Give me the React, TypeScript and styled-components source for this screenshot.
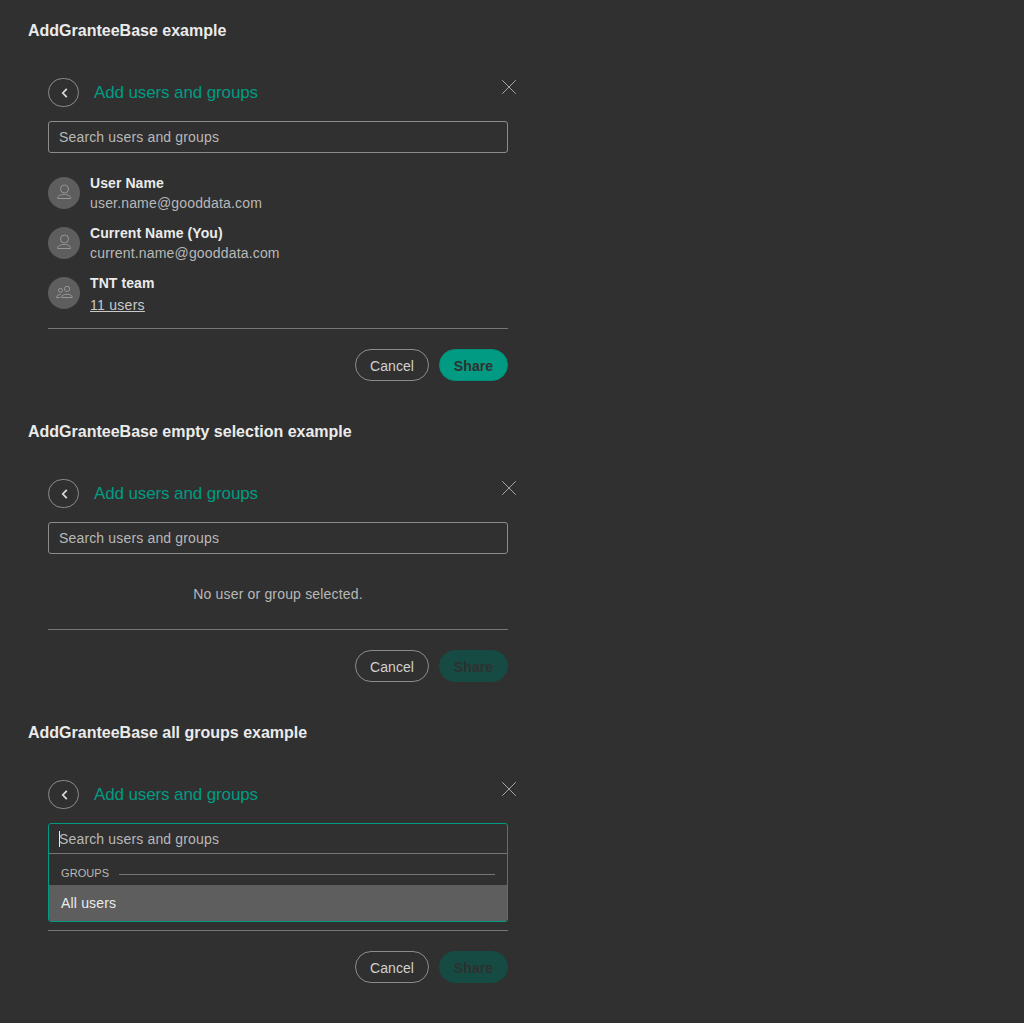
import React from "react";
import styled, { createGlobalStyle, css } from "styled-components";

const GlobalStyle = createGlobalStyle`
  *, *::before, *::after { box-sizing: border-box; }
  body {
    margin: 0;
    background: #303030;
    color: #b8b8b8;
    font: 14px/20px "Liberation Sans", Arial, sans-serif;
    letter-spacing: 0.17px;
  }
`;

const Page = styled.main`
  min-height: 1023px;
  padding: 20px 28px 0;
`;

const Example = styled.section`
  width: 500px;
  padding-bottom: 40px;
`;

const ExampleTitle = styled.h4`
  margin: 0 0 37px;
  font-size: 16px;
  line-height: 21px;
  font-weight: 700;
  letter-spacing: 0;
  color: #ebebeb;
`;

const Dialog = styled.div`
  width: 460px;
  margin-left: 20px;
`;

const Header = styled.header`
  display: flex;
  align-items: flex-start;
  height: 29px;
  margin-bottom: 14px;
`;

const BackButton = styled.button`
  display: flex;
  align-items: center;
  justify-content: center;
  width: 31px;
  height: 29px;
  padding: 0 0 0 1px;
  border: 1px solid #8c8c8c;
  border-radius: 15px;
  background: transparent;
  color: #d8d8d8;
`;

const Heading = styled.h3`
  flex: 1;
  margin: 0 0 0 15px;
  font-size: 17px;
  line-height: 29px;
  font-weight: 400;
  letter-spacing: -0.12px;
  color: #009b82;
`;

const CloseButton = styled.button`
  display: flex;
  margin: 1px -9px 0 0;
  padding: 0;
  border: 0;
  background: transparent;
  color: #a4a4a4;
`;

const fieldText = css`
  font: 14px/20px "Liberation Sans", Arial, sans-serif;
  letter-spacing: 0.16px;
`;

const SearchField = styled.div`
  display: flex;
  align-items: center;
  height: 32px;
  padding: 0 10px;
  border: 1px solid #8c8c8c;
  border-radius: 3px;
  ${fieldText}
`;

const Selection = styled.div`
  padding: 15px 0 10px;
`;

const EmptySelection = styled.div`
  height: 50px;
  padding-top: 15px;
  text-align: center;
`;

const Grantee = styled.div`
  display: flex;
  align-items: center;
  height: 50px;
  gap: 10px;
`;

const Avatar = styled.span`
  display: flex;
  align-items: center;
  justify-content: center;
  width: 32px;
  height: 32px;
  border-radius: 50%;
  background: #5e5e5e;
  color: #979797;
`;

const GranteeText = styled.div`
  display: flex;
  flex-direction: column;
  align-items: flex-start;
`;

const Name = styled.strong`
  letter-spacing: 0.08px;
  color: #ebebeb;
`;

const Members = styled.span`
  padding-top: 2px;
  height: 20px;
  letter-spacing: 0.28px;
  color: #c9c9c9;
  text-decoration: underline;
`;

const Footer = styled.footer`
  display: flex;
  justify-content: flex-end;
  gap: 10px;
  padding-top: 20px;
  border-top: 1px solid #777;
`;

const Button = styled.button<{ $primary?: boolean }>`
  width: ${(p) => (p.$primary ? 69 : 74)}px;
  height: 32px;
  padding: 2px 0 0;
  border: 1px solid ${(p) => (p.$primary ? "#008f78" : "#8c8c8c")};
  border-radius: 16px;
  background: ${(p) => (p.$primary ? "#009b82" : "transparent")};
  color: ${(p) => (p.$primary ? "#303030" : "#d0d0d0")};
  font: ${(p) => (p.$primary ? 700 : 400)} 14px/20px "Liberation Sans", Arial, sans-serif;
  letter-spacing: 0.08px;

  &:disabled {
    border-color: #154b42;
    background: #154b42;
  }
`;

const SearchSlot = styled.div`
  position: relative;
  height: 32px;
`;

const SearchMenu = styled.div`
  position: absolute;
  inset: 0 0 auto;
  height: 99px;
  overflow: hidden;
  border: 1px solid #009b82;
  border-radius: 3px;
  background: #303030;
`;

const MenuInput = styled.div`
  display: flex;
  align-items: center;
  height: 30px;
  padding: 1px 0 0 10px;
  border-bottom: 1px solid #777;
  ${fieldText}
`;

const Caret = styled.span`
  width: 1px;
  height: 16px;
  margin-right: -1px;
  background: #ebebeb;
`;

const GroupLabel = styled.div`
  display: flex;
  align-items: center;
  height: 31px;
  padding: 7px 12px 0;
  gap: 10px;
  font-size: 11px;
  letter-spacing: 0.08px;

  &::after {
    content: "";
    flex: 1;
    height: 1px;
    margin-top: 3px;
    background: #777;
  }
`;

const Option = styled.div`
  height: 36px;
  padding: 0 12px;
  background: #5e5e5e;
  color: #ebebeb;
  line-height: 36px;
`;

const UserIcon = () => (
  <svg width="16" height="16" viewBox="0 0 16 16" fill="none" stroke="currentColor" overflow="visible">
    <circle cx="8.5" cy="4" r="4" />
    <path d="M1.5 13.5C1.5 11 4.2 9.5 8.2 9.5s6.5 1.5 6.5 4z" />
  </svg>
);

const TeamIcon = () => (
  <svg width="18" height="16" viewBox="0 0 18 16" fill="none" stroke="currentColor">
    <circle cx="12.1" cy="3.9" r="2.6" />
    <circle cx="5.5" cy="5.4" r="2" />
    <path d="M6.5 12.5c0-2.1 2-3.2 5.4-3.2s5.4 1.1 5.4 3.2zM4.8 12.5H1.5c0-1.8 1.3-2.8 4.2-2.9" />
  </svg>
);

function ShareDialog({ search, children, disabled }: {
  search: React.ReactNode;
  children: React.ReactNode;
  disabled?: boolean;
}) {
  return (
    <Dialog>
      <Header>
        <BackButton aria-label="Back">
          <svg width="7" height="10" viewBox="0 0 7 10" fill="none" stroke="currentColor" strokeWidth="1.8">
            <path d="M5.8 .8 1.8 5l4 4.2" />
          </svg>
        </BackButton>
        <Heading>Add users and groups</Heading>
        <CloseButton aria-label="Close">
          <svg width="16" height="16" viewBox="0 0 16 16" stroke="currentColor" strokeWidth="1">
            <path d="M1.2 1.2l13.6 13.6M14.8 1.2 1.2 14.8" />
          </svg>
        </CloseButton>
      </Header>
      {search}
      {children}
      <Footer>
        <Button>Cancel</Button>
        <Button $primary disabled={disabled}>Share</Button>
      </Footer>
    </Dialog>
  );
}

const users = [
  { name: "User Name", email: "user.name@gooddata.com" },
  { name: "Current Name (You)", email: "current.name@gooddata.com" },
];

const placeholder = "Search users and groups";

export default function App() {
  return (
    <>
      <GlobalStyle />
      <Page>
        <Example>
          <ExampleTitle>AddGranteeBase example</ExampleTitle>
          <ShareDialog search={<SearchField>{placeholder}</SearchField>}>
            <Selection>
              {users.map((user) => (
                <Grantee key={user.email}>
                  <Avatar><UserIcon /></Avatar>
                  <GranteeText>
                    <Name>{user.name}</Name>
                    <span>{user.email}</span>
                  </GranteeText>
                </Grantee>
              ))}
              <Grantee>
                <Avatar><TeamIcon /></Avatar>
                <GranteeText>
                  <Name>TNT team</Name>
                  <Members>11 users</Members>
                </GranteeText>
              </Grantee>
            </Selection>
          </ShareDialog>
        </Example>
        <Example>
          <ExampleTitle>AddGranteeBase empty selection example</ExampleTitle>
          <ShareDialog disabled search={<SearchField>{placeholder}</SearchField>}>
            <Selection>
              <EmptySelection>No user or group selected.</EmptySelection>
            </Selection>
          </ShareDialog>
        </Example>
        <Example>
          <ExampleTitle>AddGranteeBase all groups example</ExampleTitle>
          <ShareDialog
            disabled
            search={
              <SearchSlot>
                <SearchMenu>
                  <MenuInput><Caret />{placeholder}</MenuInput>
                  <GroupLabel>GROUPS</GroupLabel>
                  <Option>All users</Option>
                </SearchMenu>
              </SearchSlot>
            }
          >
            <Selection>
              <EmptySelection />
            </Selection>
          </ShareDialog>
        </Example>
      </Page>
    </>
  );
}
